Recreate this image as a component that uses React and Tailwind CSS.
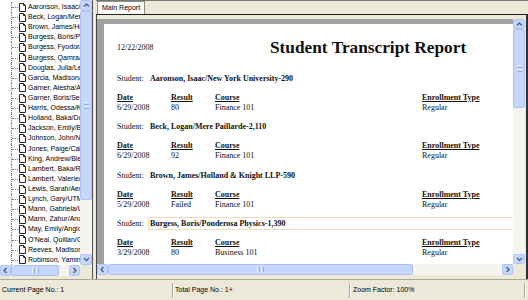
import React from "react";

const names = [
  "Aaronson, Isaac/New York University",
  "Beck, Logan/Mere Paillarde",
  "Brown, James/Holland & Knight",
  "Burgess, Boris/Ponderosa Physics",
  "Burgess, Fyodor/Acme",
  "Burgess, Qamra/Initech",
  "Douglas, Julia/Lexcorp",
  "Garcia, Madison/Umbrella",
  "Garner, Alesha/Apex",
  "Garner, Boris/Securis",
  "Harris, Odessa/Kappa",
  "Holland, Baka/Dorian",
  "Jackson, Emily/Blue Sky",
  "Johnson, John/Nexus",
  "Jones, Paige/Caltech",
  "King, Andrew/Blend",
  "Lambert, Baka/Rialto",
  "Lambert, Valerie/Orion",
  "Lewis, Sarah/Aero",
  "Lynch, Gary/UTM",
  "Mann, Gabriela/Unity",
  "Mann, Zahur/Anchor",
  "May, Emily/Anglo",
  "O'Neal, Quillan/Globe",
  "Reeves, Madison/Kite",
  "Robinson, Yamini/Zeta",
];

const blocks = [
  { name: "Aaronson, Isaac/New York University-290", date: "6/29/2008", result: "80", course: "Finance 101" },
  { name: "Beck, Logan/Mere Paillarde-2,110", date: "6/29/2008", result: "92", course: "Finance 101" },
  { name: "Brown, James/Holland & Knight LLP-590", date: "5/29/2008", result: "Failed", course: "Finance 101" },
  { name: "Burgess, Boris/Ponderosa Physics-1,390", date: "3/29/2008", result: "80", course: "Business 101", hl: true },
];

function Chevron({ dir }) {
  const paths = {
    up: "M1 4.5 L3.5 2 L6 4.5",
    down: "M1 2 L3.5 4.5 L6 2",
    left: "M4.5 1 L2 3.5 L4.5 6",
    right: "M2.5 1 L5 3.5 L2.5 6",
  };
  return (
    <svg width="7" height="7" viewBox="0 0 7 7">
      <path d={paths[dir]} fill="none" stroke="#4d6185" strokeWidth="1.4" />
    </svg>
  );
}

function ArrowBtn({ dir, className }) {
  return (
    <div
      className={
        "flex items-center justify-center bg-[#c6d6fc] border border-[#b1c5f4] rounded-[2px] shrink-0 " +
        className
      }
    >
      <Chevron dir={dir} />
    </div>
  );
}

function GripV() {
  return (
    <div className="flex flex-col gap-[1px]">
      <div className="w-[5px] h-[1px] bg-[#eef4fe]" />
      <div className="w-[5px] h-[1px] bg-[#8cb0f8]" />
      <div className="w-[5px] h-[1px] bg-[#eef4fe]" />
      <div className="w-[5px] h-[1px] bg-[#8cb0f8]" />
    </div>
  );
}

function GripH() {
  return (
    <div className="flex gap-[1px]">
      <div className="w-[1px] h-[5px] bg-[#eef4fe]" />
      <div className="w-[1px] h-[5px] bg-[#8cb0f8]" />
      <div className="w-[1px] h-[5px] bg-[#eef4fe]" />
      <div className="w-[1px] h-[5px] bg-[#8cb0f8]" />
    </div>
  );
}

function DocIcon() {
  return (
    <svg width="7" height="9" viewBox="0 0 7 9" className="shrink-0">
      <path d="M0.5 0.5 H4.5 L6.5 2.5 V8.5 H0.5 Z" fill="#fff" stroke="#2a2a2a" strokeWidth="1" />
      <path d="M4.5 0.5 V2.5 H6.5" fill="none" stroke="#2a2a2a" strokeWidth="1" />
    </svg>
  );
}

const ui = "font-['Liberation_Sans',Arial,sans-serif]";

export default function App() {
  return (
    <div className={"w-[528px] h-[300px] flex flex-col bg-[#ece9d8] overflow-hidden text-black " + ui}>
      <div className="flex h-[279px]">
        {/* Left tree panel */}
        <div className="w-[93px] flex flex-col border-r border-[#555]">
          <div className="flex h-[265px]">
            <div className="w-[80px] bg-white overflow-hidden pt-[2px]">
              {names.map((n) => (
                <div key={n} className="flex items-center h-[10.12px] whitespace-nowrap">
                  <div className="relative w-[19px] h-full shrink-0">
                    <div className="absolute left-[11px] top-0 bottom-0 border-l border-dotted border-[#808080]" />
                    <div className="absolute left-[12px] top-[5px] w-[6px] border-t border-dotted border-[#808080]" />
                  </div>
                  <DocIcon />
                  <span className="ml-[2px] text-[7px] leading-[10px]">{n}</span>
                </div>
              ))}
            </div>
            <div className="w-[12px] flex flex-col bg-[#f5f4ef]">
              <ArrowBtn dir="up" className="h-[11px]" />
              <div className="h-[189px] bg-[#c6d6fc] border border-[#a9c0f1] rounded-[2px] flex items-center justify-center">
                <GripV />
              </div>
              <div className="flex-1" />
              <ArrowBtn dir="down" className="h-[11px]" />
            </div>
          </div>
          <div className="flex h-[11px]">
            <div className="w-[80px] flex bg-[#f5f4ef]">
              <ArrowBtn dir="left" className="w-[11px]" />
              <div className="w-[48px] bg-[#c6d6fc] border border-[#a9c0f1] rounded-[2px] flex items-center justify-center">
                <GripH />
              </div>
              <div className="flex-1" />
              <ArrowBtn dir="right" className="w-[11px]" />
            </div>
            <div className="w-[12px] bg-[#ece9d8]" />
          </div>
        </div>

        <div className="w-[3px]" />

        {/* Right report panel */}
        <div className="flex-1 flex flex-col min-w-0">
          <div className="h-[15px] flex items-end border-b border-[#222] border-t border-t-[#777]">
            <div className="ml-[1px] h-[13px] px-[4px] bg-[#fcfcfb] border border-b-0 border-[#8f8f8f] text-[7px] leading-[12px]">
              Main Report
            </div>
          </div>
          <div className="flex-1 flex flex-col border-l border-[#444] border-r-2 border-r-[#303030] pt-[4px] pr-[1px] pb-[4px] min-h-0">
            <div className="flex h-[245px]">
              <div className="flex-1 bg-[#a0a0a0] pl-[7px] pt-[5px] overflow-hidden">
                <div className="bg-white h-full font-['Liberation_Serif',serif] text-[8px] leading-[10px] pl-[13px] pt-[14px] text-[#111]">
                  <div className="flex items-center h-[20px]">
                    <span className="w-[153px]">12/22/2008</span>
                    <span className="text-[17.3px] leading-[20px] font-bold">Student Transcript Report</span>
                  </div>
                  <div className="mt-[16px]">
                    {blocks.map((b) => (
                      <div key={b.name} className="h-[48.33px]">
                        <div className="flex items-center h-[10px]">
                          <span className="w-[31px] shrink-0">Student:</span>
                          <span
                            className={
                              "flex-1 h-[13px] flex items-center pl-[1px] font-bold border " +
                              (b.hl ? "border-[#f8d8bb] border-r-0" : "border-transparent")
                            }
                          >
                            {b.name}
                          </span>
                        </div>
                        <div className="flex items-center h-[10px] mt-[9px] font-bold underline">
                          <span className="w-[54px]">Date</span>
                          <span className="w-[44px]">Result</span>
                          <span className="w-[207px]">Course</span>
                          <span>Enrollment Type</span>
                        </div>
                        <div className="flex items-center h-[10px]">
                          <span className="w-[54px]">{b.date}</span>
                          <span className="w-[44px]">{b.result}</span>
                          <span className="w-[207px]">{b.course}</span>
                          <span>Regular</span>
                        </div>
                      </div>
                    ))}
                  </div>
                </div>
              </div>
              <div className="w-[12px] flex flex-col bg-[#f5f4ef]">
                <ArrowBtn dir="up" className="h-[10px]" />
                <div className="h-[79px] bg-[#c6d6fc] border border-[#a9c0f1] rounded-[2px] flex items-center justify-center">
                  <GripV />
                </div>
                <div className="flex-1" />
                <ArrowBtn dir="down" className="h-[10px]" />
              </div>
            </div>
            <div className="flex h-[11px]">
              <div className="flex-1 flex bg-[#f5f4ef]">
                <ArrowBtn dir="left" className="w-[11px]" />
                <div className="w-[305px] bg-[#c6d6fc] border border-[#a9c0f1] rounded-[2px] flex items-center justify-center">
                  <GripH />
                </div>
                <div className="flex-1" />
                <ArrowBtn dir="right" className="w-[11px]" />
              </div>
              <div className="w-[12px] bg-[#ece9d8]" />
            </div>
          </div>
        </div>
      </div>

      {/* Status bar */}
      <div className="h-[21px] flex items-center border-t border-[#aca899] text-[7px]">
        <div className="w-[172px] pl-[2px]">Current Page No.: 1</div>
        <div className="w-[2px] h-[15px] border-l border-[#aca899] border-r border-r-white" />
        <div className="w-[175px] pl-[1px]">Total Page No.: 1+</div>
        <div className="w-[2px] h-[15px] border-l border-[#aca899] border-r border-r-white" />
        <div className="w-[173px] pl-[2px]">Zoom Factor: 100%</div>
        <div className="w-[2px] h-[15px] border-l border-[#aca899] border-r border-r-white" />
      </div>
    </div>
  );
}
